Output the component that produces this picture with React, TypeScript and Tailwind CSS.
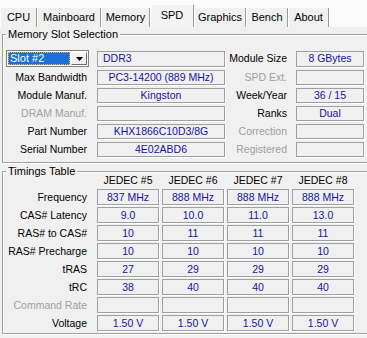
import React from "react";

const tabs = [
  { name: "CPU", w: "w-[37px]" },
  { name: "Mainboard", w: "w-[64px]" },
  { name: "Memory", w: "w-[49px]" },
  { name: "SPD", w: "w-[44px]", active: true },
  { name: "Graphics", w: "w-[52px]" },
  { name: "Bench", w: "w-[42px]" },
  { name: "About", w: "w-[41px]" },
];

function Field({ children, className = "" }: { children?: React.ReactNode; className?: string }) {
  return (
    <div
      className={`border border-[#a0a0a0] shadow-[1px_1px_0_#fff] flex items-center justify-center text-[#1414a0] leading-none whitespace-nowrap overflow-hidden ${className}`}
    >
      {children}
    </div>
  );
}

function Label({ children, dim = false, className = "" }: { children: React.ReactNode; dim?: boolean; className?: string }) {
  return (
    <div className={`text-right whitespace-nowrap leading-none ${dim ? "text-[#a0a0a0]" : "text-black"} ${className}`}>
      {children}
    </div>
  );
}

function GroupBox({ title, className = "", children }: { title: string; className?: string; children: React.ReactNode }) {
  return (
    <div className={`relative border border-[#a0a0a0] shadow-[inset_1px_1px_0_#fff,1px_1px_0_#fff] ${className}`}>
      <span className="absolute left-[3px] top-[-8px] px-[2px] bg-[#f0f0f0] leading-[14px] text-black whitespace-nowrap text-[11px]">
        {title}
      </span>
      {children}
    </div>
  );
}

const memRows = [
  { l: "Max Bandwidth", v: "PC3-14200 (889 MHz)", r: "SPD Ext.", rv: "", rdim: true },
  { l: "Module Manuf.", v: "Kingston", r: "Week/Year", rv: "36 / 15" },
  { l: "DRAM Manuf.", v: "", ldim: true, r: "Ranks", rv: "Dual" },
  { l: "Part Number", v: "KHX1866C10D3/8G", r: "Correction", rv: "", rdim: true },
  { l: "Serial Number", v: "4E02ABD6", r: "Registered", rv: "", rdim: true },
];

const timingRows: { l: string; v: string[]; dim?: boolean }[] = [
  { l: "Frequency", v: ["837 MHz", "888 MHz", "888 MHz", "888 MHz"] },
  { l: "CAS# Latency", v: ["9.0", "10.0", "11.0", "13.0"] },
  { l: "RAS# to CAS#", v: ["10", "11", "11", "11"] },
  { l: "RAS# Precharge", v: ["10", "10", "10", "10"] },
  { l: "tRAS", v: ["27", "29", "29", "29"] },
  { l: "tRC", v: ["38", "40", "40", "40"] },
  { l: "Command Rate", v: ["", "", "", ""], dim: true },
  { l: "Voltage", v: ["1.50 V", "1.50 V", "1.50 V", "1.50 V"] },
];

export default function App() {
  return (
    <div className="w-[367px] h-[338px] overflow-hidden bg-[#f0f0f0] font-['Liberation_Sans',Arial,sans-serif] text-[10.5px]">
      {/* Tab strip */}
      <div className="h-[27px] bg-[#fbfbfb] flex items-end text-[11px]">
        {tabs.map((t) => (
          <div
            key={t.name}
            className={`${t.w} flex justify-center border-l border-l-white border-r border-r-[#9a9a9a] text-black leading-none ${
              t.active ? "h-[22px] items-center pb-[1px] bg-[#f4f4f4]" : "h-[19px] items-center bg-[#f0f0f0]"
            }`}
          >
            {t.name}
          </div>
        ))}
      </div>

      {/* Memory Slot Selection */}
      <GroupBox title="Memory Slot Selection" className="mt-[7px] ml-[2px] w-[372px] h-[129px] pt-[14px]">
        {/* Row 1 */}
        <div className="h-[19px] flex items-center">
          <div className="ml-[3px] w-[83px] h-[17px] border border-[#828282] bg-white flex p-[1px] gap-[1px]">
            <div className="flex-1 bg-[#1b6fd6] border border-dotted border-[#e9b45a] text-white flex items-center pl-[1px] leading-none text-[11px]">
              Slot #2
            </div>
            <div className="w-[16px] bg-[#f0f0f0] border-t border-l border-t-white border-l-white border-b border-r border-b-[#6d6d6d] border-r-[#6d6d6d] flex items-center justify-center">
              <svg width="7" height="4" viewBox="0 0 7 4">
                <path d="M0 0h7L3.5 4z" fill="#000" />
              </svg>
            </div>
          </div>
          <Field className="ml-[8px] w-[128px] h-[16px] !justify-start pl-[5px]">DDR3</Field>
          <Label className="w-[62px]">Module Size</Label>
          <Field className="ml-[9px] w-[68px] h-[16px]">8 GBytes</Field>
        </div>
        {memRows.map((r) => (
          <div key={r.l} className="h-[18px] flex items-center">
            <Label dim={r.ldim} className="w-[84px]">
              {r.l}
            </Label>
            <Field className="ml-[10px] w-[128px] h-[15px]">{r.v}</Field>
            <Label dim={r.rdim} className="w-[62px]">
              {r.r}
            </Label>
            <Field className="ml-[9px] w-[68px] h-[15px]">{r.rv}</Field>
          </div>
        ))}
      </GroupBox>

      {/* Timings Table */}
      <GroupBox title="Timings Table" className="mt-[8px] ml-[2px] w-[372px] h-[163px]">
        <div className="h-[17px] flex items-center">
          <div className="w-[84px]" />
          <div className="ml-[10px] grid grid-cols-[62px_62px_62px_62px] gap-x-[3px]">
            {["JEDEC #5", "JEDEC #6", "JEDEC #7", "JEDEC #8"].map((h) => (
              <div key={h} className="text-center text-black leading-none">
                {h}
              </div>
            ))}
          </div>
        </div>
        {timingRows.map((r) => (
          <div key={r.l} className="h-[18px] flex items-start">
            <Label dim={r.dim} className="w-[84px] h-[16px] flex items-center justify-end">
              {r.l}
            </Label>
            <div className="ml-[10px] grid grid-cols-[62px_62px_62px_62px] gap-x-[3px]">
              {r.v.map((v, i) => (
                <Field key={i} className="h-[16px]">
                  {v}
                </Field>
              ))}
            </div>
          </div>
        ))}
      </GroupBox>
    </div>
  );
}
